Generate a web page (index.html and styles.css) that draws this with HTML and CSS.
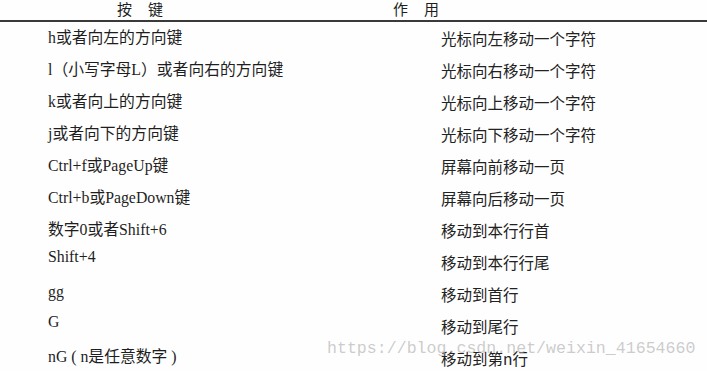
FILE: index.html
```html
<!DOCTYPE html>
<html lang="zh-CN">
<head>
<meta charset="utf-8">
<title>vi 光标移动键</title>
<link rel="stylesheet" href="styles.css">
</head>
<body>
<div class="sheet">
  <div class="head">
    <div class="hcell hleft"><span>按</span><span>键</span></div>
    <div class="hcell hright"><span>作</span><span>用</span></div>
  </div>
  <div class="rows">
    <div class="key">h或者向左的方向键</div><div class="act">光标向左移动一个字符</div>
    <div class="key">l（小写字母L）或者向右的方向键</div><div class="act">光标向右移动一个字符</div>
    <div class="key">k或者向上的方向键</div><div class="act">光标向上移动一个字符</div>
    <div class="key">j或者向下的方向键</div><div class="act">光标向下移动一个字符</div>
    <div class="key">Ctrl+f或PageUp键</div><div class="act">屏幕向前移动一页</div>
    <div class="key">Ctrl+b或PageDown键</div><div class="act">屏幕向后移动一页</div>
    <div class="key">数字0或者Shift+6</div><div class="act">移动到本行行首</div>
    <div class="key up10">Shift+4</div><div class="act">移动到本行行尾</div>
    <div class="key up4">gg</div><div class="act">移动到首行</div>
    <div class="key up8">G</div><div class="act">移动到尾行</div>
    <div class="key up2">nG ( n是任意数字 )</div><div class="act">移动到第n行</div>
  </div>
  <div class="mark">https://blog.csdn.net/weixin_41654660</div>
</div>
</body>
</html>
```
FILE: styles.css
```css
html, body {
  margin: 0;
  padding: 0;
  background: #fefefe;
}
body {
  font-family: "Liberation Serif", "Noto Sans CJK SC", serif;
  font-size: 15.5px;
  color: #1e1e1e;
  width: 707px;
  height: 371px;
  overflow: hidden;
}
.sheet {
  position: relative;
  height: 371px;
}
.head {
  display: grid;
  grid-template-columns: 393px 1fr;
  height: 20px;
  border-bottom: 2px solid #3a3a3a;
  font-family: "Noto Sans CJK SC", sans-serif;
  font-size: 15px;
  line-height: 18px;
}
.hcell {
  display: flex;
  gap: 16px;
}
.hleft {
  padding-left: 117px;
}
.rows {
  display: grid;
  grid-template-columns: 393px 1fr;
  grid-auto-rows: 32px;
  padding-left: 48px;
}
.key, .act {
  display: flex;
  align-items: center;
  white-space: pre;
  line-height: 20px;
}
.key {
  font-size: 15.8px;
}
.act {
  font-family: "Noto Sans CJK SC", sans-serif;
  color: #222;
}
.up10 { padding-bottom: 10px; }
.up8 { padding-bottom: 8px; }
.up4 { padding-bottom: 4px; }
.up2 { padding-bottom: 2px; }
.mark {
  position: absolute;
  left: 327px;
  top: 339px;
  font-family: "Liberation Mono", monospace;
  font-size: 16.6px;
  line-height: 20px;
  color: rgba(170, 170, 170, 0.6);
  white-space: nowrap;
  pointer-events: none;
}
```
